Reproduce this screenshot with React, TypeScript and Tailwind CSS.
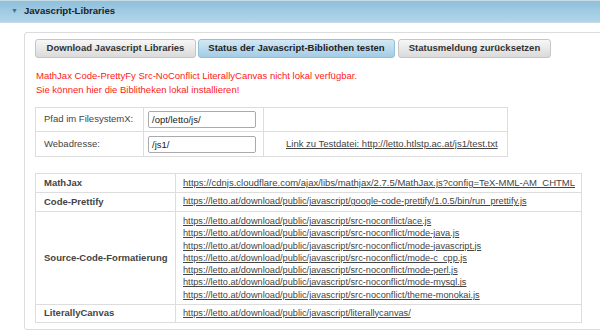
const links = [
  'https://letto.at/download/public/javascript/src-noconflict/ace.js',
  'https://letto.at/download/public/javascript/src-noconflict/mode-java.js',
  'https://letto.at/download/public/javascript/src-noconflict/mode-javascript.js',
  'https://letto.at/download/public/javascript/src-noconflict/mode-c_cpp.js',
  'https://letto.at/download/public/javascript/src-noconflict/mode-perl.js',
  'https://letto.at/download/public/javascript/src-noconflict/mode-mysql.js',
  'https://letto.at/download/public/javascript/src-noconflict/theme-monokai.js',
];

const App = () => {
  return (
    <div className="w-[600px] h-[331px] overflow-hidden bg-white font-['Liberation_Sans',Arial,sans-serif] text-[9.5px] text-[#333] whitespace-nowrap">
      <div className="h-[23px] flex items-center gap-[6px] pl-[11px] border-t border-b border-[#c7dbe6] bg-gradient-to-b from-[#8fc0db] to-[#b2d6ea] text-[#222]">
        <span className="text-[7px] text-[#4a6b80]">▼</span>
        <span className="font-bold text-[9.6px]">Javascript-Libraries</span>
      </div>

      <div className="ml-6 mt-[9px] w-[590px] h-[298px] border border-[#dcdcdc] rounded-[3px] pl-[10px] pt-[6px]">
        <div className="flex gap-[2px]">
          <button className="w-[161px] h-[19px] rounded-[3px] border border-[#c5c5c5] bg-gradient-to-b from-[#f7f7f7] to-[#dadada] font-bold text-[#333]">
            Download Javascript Libraries
          </button>
          <button className="w-[197px] h-[19px] rounded-[3px] border border-[#93bfd8] bg-gradient-to-b from-[#d3e8f4] to-[#a2cce4] font-bold text-[#222]">
            Status der Javascript-Bibliothen testen
          </button>
          <button className="ml-[1px] w-[153px] h-[19px] rounded-[3px] border border-[#c5c5c5] bg-gradient-to-b from-[#f7f7f7] to-[#dadada] font-bold text-[#333]">
            Statusmeldung zurücksetzen
          </button>
        </div>

        <div className="mt-[11px] ml-[1px] text-[#ff2020] leading-[14px]">
          <div>MathJax Code-PrettyFy Src-NoConflict LiterallyCanvas nicht lokal verfügbar.</div>
          <div>Sie können hier die Biblitheken lokal installieren!</div>
        </div>

        <table className="mt-[10px] border-collapse text-[#444]">
          <tbody>
            <tr className="h-[24px]">
              <td className="w-[108px] border border-[#ddd] pl-[8px]">Pfad im FilesystemX:</td>
              <td className="w-[120px] border border-[#ddd] pl-[4px]">
                <div className="w-[108px] h-[17px] border border-[#aaa] rounded-[2px] pl-[3px] leading-[15px] text-[#222]">/opt/letto/js/</div>
              </td>
              <td className="w-[244px] border border-[#ddd]"></td>
            </tr>
            <tr className="h-[25px]">
              <td className="border border-[#ddd] pl-[8px]">Webadresse:</td>
              <td className="border border-[#ddd] pl-[4px]">
                <div className="w-[108px] h-[17px] border border-[#aaa] rounded-[2px] pl-[3px] leading-[15px] text-[#222]">/js1/</div>
              </td>
              <td className="border border-[#ddd] pl-[22px]">
                <a className="underline text-[#444]">Link zu Testdatei: http://letto.htlstp.ac.at/js1/test.txt</a>
              </td>
            </tr>
          </tbody>
        </table>

        <table className="mt-[16px] border-collapse w-[547px] text-[#444]">
          <tbody>
            <tr className="h-[19px]">
              <td className="w-[140px] border border-[#ddd] pl-[8px] font-bold">MathJax</td>
              <td className="border border-[#ddd] pl-[7px] text-[9.5px]">
                <a className="underline">https://cdnjs.cloudflare.com/ajax/libs/mathjax/2.7.5/MathJax.js?config=TeX-MML-AM_CHTML</a>
              </td>
            </tr>
            <tr className="h-[19px]">
              <td className="border border-[#ddd] pl-[8px] font-bold">Code-Prettify</td>
              <td className="border border-[#ddd] pl-[7px] text-[9.2px]">
                <a className="underline">https://letto.at/download/public/javascript/google-code-prettify/1.0.5/bin/run_prettify.js</a>
              </td>
            </tr>
            <tr>
              <td className="border border-[#ddd] pl-[8px] font-bold">Source-Code-Formatierung</td>
              <td className="border border-[#ddd] pl-[7px] py-[3px] leading-[12.3px] text-[9.2px]">
                {links.map((l) => (
                  <div key={l}>
                    <a className="underline">{l}</a>
                  </div>
                ))}
              </td>
            </tr>
            <tr className="h-[18px]">
              <td className="border border-[#ddd] pl-[8px] font-bold">LiterallyCanvas</td>
              <td className="border border-[#ddd] pl-[7px] text-[9.2px]">
                <a className="underline">https://letto.at/download/public/javascript/literallycanvas/</a>
              </td>
            </tr>
          </tbody>
        </table>
      </div>
    </div>
  );
};

export default App;
